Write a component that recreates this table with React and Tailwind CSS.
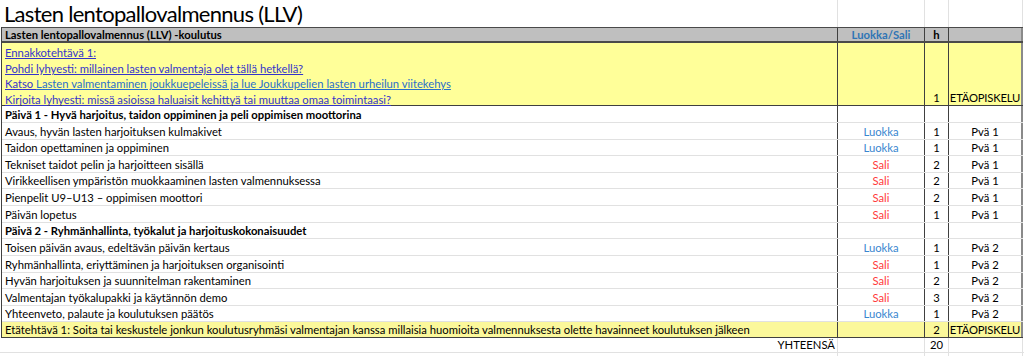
import React from "react";

const FONT = { fontFamily: "Lato, 'Liberation Sans', sans-serif" };

const blue = "text-[#3a86cf]";
const red = "text-[#ff3b3b]";

const dayOne = [
  { t: "Avaus, hyvän lasten harjoituksen kulmakivet", p: "Luokka", h: 1, d: "Pvä 1", hh: "h-[17px]" },
  { t: "Taidon opettaminen ja oppiminen", p: "Luokka", h: 1, d: "Pvä 1", hh: "h-[16px]" },
  { t: "Tekniset taidot pelin ja harjoitteen sisällä", p: "Sali", h: 2, d: "Pvä 1", hh: "h-[17px]" },
  { t: "Virikkeellisen ympäristön muokkaaminen lasten valmennuksessa", p: "Sali", h: 2, d: "Pvä 1", hh: "h-[16px]" },
  { t: "Pienpelit U9–U13 – oppimisen moottori", p: "Sali", h: 2, d: "Pvä 1", hh: "h-[17px]" },
  { t: "Päivän lopetus", p: "Sali", h: 1, d: "Pvä 1", hh: "h-[17px]" },
];

const dayTwo = [
  { t: "Toisen päivän avaus, edeltävän päivän kertaus", p: "Luokka", h: 1, d: "Pvä 2", hh: "h-[17px]" },
  { t: "Ryhmänhallinta, eriyttäminen ja harjoituksen organisointi", p: "Sali", h: 1, d: "Pvä 2", hh: "h-[17px]" },
  { t: "Hyvän harjoituksen ja suunnitelman rakentaminen", p: "Sali", h: 2, d: "Pvä 2", hh: "h-[16px]" },
  { t: "Valmentajan työkalupakki ja käytännön demo", p: "Sali", h: 3, d: "Pvä 2", hh: "h-[17px]" },
  { t: "Yhteenveto, palaute ja koulutuksen päätös", p: "Luokka", h: 1, d: "Pvä 2", hh: "h-[16px]" },
];

// yksi taulukon rivi: A = aihe, B = luokka/sali, C = tunnit, D = päivä
const Row = ({ hh, bg = "", line = "border-b-[#e1e1e1]", children }) => (
  <div className={`flex ${hh} ${bg} border-b ${line} text-[11.25px] leading-[14px] text-black`}>{children}</div>
);

const Session = ({ r }) => (
  <Row hh={r.hh}>
    <div className="w-[836px] border-r border-[#404040] px-[3px] flex items-end">{r.t}</div>
    <div className={`w-[87px] border-r border-[#404040] flex items-end justify-center ${r.p === "Sali" ? red : blue}`}>{r.p}</div>
    <div className="w-[24px] border-r border-[#404040] flex items-end justify-center">{r.h}</div>
    <div className="w-[74px] border-r-2 border-[#8a8a8a] flex items-end justify-center">{r.d}</div>
  </Row>
);

const DayTitle = ({ children, hh }) => (
  <Row hh={hh}>
    <div className="w-[836px] border-r border-[#404040] px-[3px] flex items-end font-bold">{children}</div>
    <div className="w-[87px] border-r border-[#404040]" />
    <div className="w-[24px] border-r border-[#404040]" />
    <div className="w-[74px] border-r-2 border-[#8a8a8a]" />
  </Row>
);

export default function App() {
  return (
    <div className="w-[1024px] h-[356px] bg-white overflow-hidden" style={FONT}>
      {/* otsikko */}
      <div className="flex h-[27px]">
        <div className="w-[838px] border-r border-[#e1e1e1] pl-[4px] flex items-end text-[22px] leading-[26px] tracking-[-0.7px] text-black">
          Lasten lentopallovalmennus (LLV)
        </div>
        <div className="w-[87px] border-r border-[#e1e1e1]" />
        <div className="w-[24px] border-r border-[#e1e1e1]" />
        <div className="w-[74px] border-r border-[#e1e1e1]" />
      </div>

      <div className="ml-[1px] w-[1022px] border-l border-[#404040]">
        {/* otsikkorivi */}
        <div className="flex h-[16px] bg-[#bfbfbf] border-t border-b-2 border-[#4a4a4a] text-[11.25px] leading-[13px] font-bold">
          <div className="w-[836px] border-r border-[#404040] px-[3px] flex items-end">Lasten lentopallovalmennus (LLV) -koulutus</div>
          <div className="w-[87px] border-r border-[#404040] flex items-end justify-center text-[#2f75b5]">Luokka/Sali</div>
          <div className="w-[24px] border-r border-[#404040] flex items-end justify-center">h</div>
          <div className="w-[74px] border-r-2 border-[#8a8a8a]" />
        </div>

        {/* ennakkotehtävä */}
        <div className="flex h-[63px] bg-[#ffff99] border-b border-[#404040] text-[11.25px] leading-[15.67px]">
          <div className="w-[836px] border-r border-[#404040] px-[3px] pt-[2px] flex flex-col justify-start text-[#3434cc]">
            <span className="underline">Ennakkotehtävä 1:</span>
            <span className="underline">Pohdi lyhyesti: millainen lasten valmentaja olet tällä hetkellä?</span>
            <span>
              <span className="underline">Katso </span>
              <span className="underline text-[#2a6fc9]">Lasten valmentaminen joukkuepeleissä ja lue Joukkupelien lasten urheilun viitekehys</span>
            </span>
            <span className="underline">Kirjoita lyhyesti: missä asioissa haluaisit kehittyä tai muuttaa omaa toimintaasi?</span>
          </div>
          <div className="w-[87px] border-r border-[#404040]" />
          <div className="w-[24px] border-r border-[#404040] flex items-end justify-center text-black leading-[14px]">1</div>
          <div className="w-[74px] border-r-2 border-[#8a8a8a] flex items-end justify-center text-black leading-[14px] tracking-[-0.2px]">ETÄOPISKELU</div>
        </div>

        <DayTitle hh="h-[17px]">Päivä 1 - Hyvä harjoitus, taidon oppiminen ja peli oppimisen moottorina</DayTitle>
        {dayOne.map((r) => (
          <Session key={r.t} r={r} />
        ))}
        <DayTitle hh="h-[16px]">Päivä 2 - Ryhmänhallinta, työkalut ja harjoituskokonaisuudet</DayTitle>
        {dayTwo.map((r) => (
          <Session key={r.t} r={r} />
        ))}

        {/* etätehtävä */}
        <Row hh="h-[16px]" bg="bg-[#fbf89b]" line="border-b-[#404040]">
          <div className="w-[836px] border-r border-[#404040] px-[3px] flex items-end">
            Etätehtävä 1: Soita tai keskustele jonkun koulutusryhmäsi valmentajan kanssa millaisia huomioita valmennuksesta olette havainneet koulutuksen jälkeen
          </div>
          <div className="w-[87px] border-r border-[#404040]" />
          <div className="w-[24px] border-r border-[#404040] flex items-end justify-center">2</div>
          <div className="w-[74px] border-r-2 border-[#8a8a8a] flex items-end justify-center tracking-[-0.2px]">ETÄOPISKELU</div>
        </Row>
      </div>

      {/* yhteensä */}
      <div className="flex h-[15px] border-b border-[#e1e1e1] text-[11.25px] leading-[14px] text-black">
        <div className="w-[838px] border-r border-[#e1e1e1] pr-[2px] flex items-end justify-end">YHTEENSÄ</div>
        <div className="w-[87px] border-r border-[#e1e1e1]" />
        <div className="w-[24px] border-r border-[#e1e1e1] flex items-end justify-center">20</div>
        <div className="w-[74px] border-r border-[#e1e1e1]" />
      </div>
      <div className="flex h-[4px]">
        <div className="w-[838px] border-r border-[#e1e1e1]" />
        <div className="w-[87px] border-r border-[#e1e1e1]" />
        <div className="w-[24px] border-r border-[#e1e1e1]" />
        <div className="w-[74px] border-r border-[#e1e1e1]" />
      </div>
    </div>
  );
}
